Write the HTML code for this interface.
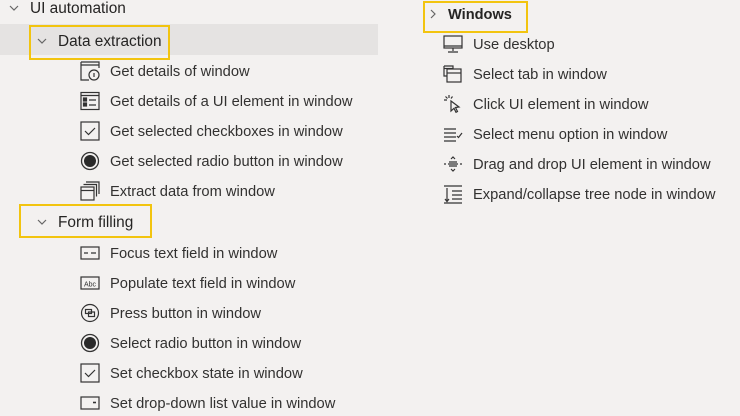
<!DOCTYPE html>
<html><head><meta charset="utf-8"><style>
*{margin:0;padding:0;box-sizing:border-box}
body{width:740px;height:416px;background:#f3f1f0;position:relative;overflow:hidden;font-family:"Liberation Sans",sans-serif;color:#323130;font-size:14.7px}
.t{position:absolute;white-space:nowrap;line-height:18px;margin-top:1px}
.h{font-size:15.4px;color:#252423}
.ic{position:absolute;width:20px;height:20px}
.box{position:absolute;border:2px solid #f2c40f}
.ch{position:absolute;font-size:11px;color:#555;line-height:12px}
</style></head><body>
<div style="position:absolute;left:0;top:24px;width:378px;height:31px;background:#e5e3e2"></div>
<div class="box" style="left:29px;top:25px;width:141px;height:35px"></div>
<div class="box" style="left:19px;top:204px;width:133px;height:34px"></div>
<div class="box" style="left:423px;top:1px;width:105px;height:32px"></div>

<svg class="ch" style="left:9px;top:4px" width="10" height="8"><path d="M1 2l4 4 4-4" fill="none" stroke="#666" stroke-width="1.2"/></svg>
<div class="t h" style="left:30px;top:-1px">UI automation</div>
<svg class="ch" style="left:37px;top:37px" width="10" height="8"><path d="M1 2l4 4 4-4" fill="none" stroke="#666" stroke-width="1.2"/></svg>
<div class="t h" style="left:58px;top:32px">Data extraction</div>
<svg class="ch" style="left:37px;top:218px" width="10" height="8"><path d="M1 2l4 4 4-4" fill="none" stroke="#666" stroke-width="1.2"/></svg>
<div class="t h" style="left:58px;top:213px">Form filling</div>
<svg class="ch" style="left:429px;top:9px" width="8" height="10"><path d="M2 1l4 4-4 4" fill="none" stroke="#666" stroke-width="1.2"/></svg>
<div class="t h" style="left:448px;top:5px;font-weight:bold;font-size:14.6px">Windows</div>

<svg class="ic" style="left:80px;top:61px" viewBox="0 0 20 20" fill="none" stroke="#333" stroke-width="1.2"><path d="M1 1h18v6M1 1v18h8M1 4h18"/><circle cx="14" cy="14" r="5"/><path d="M14 12v4"/></svg>
<div class="t" style="left:110px;top:62px">Get details of window</div>
<svg class="ic" style="left:80px;top:91px" viewBox="0 0 20 20" fill="none" stroke="#333" stroke-width="1.2"><rect x="1" y="1.5" width="18" height="17"/><path d="M1 4.5h18"/><rect x="3.5" y="7" width="3" height="3" fill="#333"/><rect x="3.5" y="12" width="3" height="3" fill="#333"/><path d="M9 9h7M9 14h7"/></svg>
<div class="t" style="left:110px;top:92px">Get details of a UI element in window</div>
<svg class="ic" style="left:80px;top:121px" viewBox="0 0 20 20" fill="none" stroke="#333" stroke-width="1.2"><rect x="1" y="1" width="18" height="18"/><path d="M5 10l3.5 3.5L15 7"/></svg>
<div class="t" style="left:110px;top:122px">Get selected checkboxes in window</div>
<svg class="ic" style="left:80px;top:151px" viewBox="0 0 20 20"><circle cx="10" cy="10" r="8.5" fill="none" stroke="#333" stroke-width="1.3"/><circle cx="10" cy="10" r="6" fill="#2a2a2a"/></svg>
<div class="t" style="left:110px;top:152px">Get selected radio button in window</div>
<svg class="ic" style="left:80px;top:181px" viewBox="0 0 20 20" fill="none" stroke="#333" stroke-width="1.2"><path d="M6 1h13v12M3.5 3.5h13v12"/><rect x="1" y="6" width="13" height="13"/><path d="M1 9.5h13"/></svg>
<div class="t" style="left:110px;top:182px">Extract data from window</div>

<svg class="ic" style="left:80px;top:243px" viewBox="0 0 20 20" fill="none" stroke="#333" stroke-width="1.2"><rect x="1" y="4" width="18" height="12"/><path d="M4 10h4M11 10h5"/></svg>
<div class="t" style="left:110px;top:244px">Focus text field in window</div>
<svg class="ic" style="left:80px;top:273px" viewBox="0 0 20 20"><rect x="1" y="4" width="18" height="12" fill="none" stroke="#333" stroke-width="1.2"/><text x="10" y="13.5" font-size="7" text-anchor="middle" font-family="Liberation Sans" fill="#333">Abc</text></svg>
<div class="t" style="left:110px;top:274px">Populate text field in window</div>
<svg class="ic" style="left:80px;top:303px" viewBox="0 0 20 20" fill="none" stroke="#333" stroke-width="1.2"><circle cx="10" cy="10" r="8.5"/><rect x="5.5" y="6.5" width="6" height="4"/><rect x="8.5" y="9" width="6" height="4.5"/></svg>
<div class="t" style="left:110px;top:304px">Press button in window</div>
<svg class="ic" style="left:80px;top:333px" viewBox="0 0 20 20"><circle cx="10" cy="10" r="8.5" fill="none" stroke="#333" stroke-width="1.3"/><circle cx="10" cy="10" r="6" fill="#2a2a2a"/></svg>
<div class="t" style="left:110px;top:334px">Select radio button in window</div>
<svg class="ic" style="left:80px;top:363px" viewBox="0 0 20 20" fill="none" stroke="#333" stroke-width="1.2"><rect x="1" y="1" width="18" height="18"/><path d="M5 10l3.5 3.5L15 7"/></svg>
<div class="t" style="left:110px;top:364px">Set checkbox state in window</div>
<svg class="ic" style="left:80px;top:393px" viewBox="0 0 20 20" fill="none" stroke="#333" stroke-width="1.2"><rect x="1" y="4" width="18" height="12"/><path d="M13 9.5h3" stroke-width="1.6"/></svg>
<div class="t" style="left:110px;top:394px">Set drop-down list value in window</div>

<svg class="ic" style="left:443px;top:34px" viewBox="0 0 20 20" fill="none" stroke="#333" stroke-width="1.2"><rect x="1" y="2" width="18" height="12"/><path d="M1 12h18M10 14v3M5 18h10"/></svg>
<div class="t" style="left:473px;top:35px">Use desktop</div>
<svg class="ic" style="left:443px;top:64px" viewBox="0 0 20 20" fill="none" stroke="#333" stroke-width="1.2"><path d="M1 2h9v3M1 2v10h3"/><rect x="4" y="5" width="14" height="13"/><path d="M4 9h14"/><path d="M1 4.5h9"/></svg>
<div class="t" style="left:473px;top:65px">Select tab in window</div>
<svg class="ic" style="left:443px;top:94px" viewBox="0 0 20 20" fill="none" stroke="#333" stroke-width="1.2"><path d="M8 7l8 6-3.5.5 2 4-1.5.8-2-4L8 17z"/><path d="M6 1v3M1 6h3M2.5 2.5l2 2M9.5 2.5l-1.5 2"/></svg>
<div class="t" style="left:473px;top:95px">Click UI element in window</div>
<svg class="ic" style="left:443px;top:124px" viewBox="0 0 20 20" fill="none" stroke="#333" stroke-width="1.2"><path d="M1 5h12M1 9h12M1 13h12M1 17h12M14 12l1.5 1.5L19 9"/></svg>
<div class="t" style="left:473px;top:125px">Select menu option in window</div>
<svg class="ic" style="left:443px;top:154px" viewBox="0 0 20 20" fill="none" stroke="#333" stroke-width="1.2"><path d="M1 10h2M17 10h2M6 8h8M5 10h10M6 12h8M8 5l2-2 2 2M8 15l2 2 2-2"/></svg>
<div class="t" style="left:473px;top:155px">Drag and drop UI element in window</div>
<svg class="ic" style="left:443px;top:184px" viewBox="0 0 20 20" fill="none" stroke="#333" stroke-width="1.2"><path d="M1 2h18M4 4v13M2 15l2 2.5L6 15M9 7h10M9 11h10M9 15h10M1 19h18"/></svg>
<div class="t" style="left:473px;top:185px">Expand/collapse tree node in window</div>
</body></html>
